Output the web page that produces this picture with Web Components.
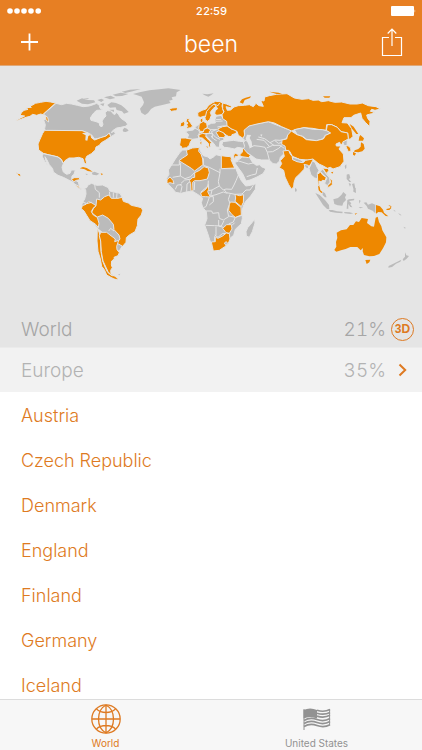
<!DOCTYPE html>
<html lang="en">
<head>
<meta charset="utf-8">
<meta name="viewport" content="width=device-width, initial-scale=1">
<title>been</title>
<style>
html, body {
  margin: 0;
  height: 100%;
}
body {
  --accent: #e77f23;
  --accent-text: #de7a22;
  --land: #bbbbbb;
  --visited: #ee8800;
  --sea: #e5e5e5;
  font-family: Inter, "Liberation Sans", sans-serif;
  font-weight: 300;
  font-size: 19px;
  font-variant-numeric: tabular-nums;
}
</style>
</head>
<body>
<been-app></been-app>

<template id="been-app">
<style>
:host {
  display: flex;
  flex-direction: column;
  height: 100vh;
  overflow: hidden;
  background: #fff;
}
.list {
  flex: 1;
  min-height: 0;
  padding-top: 1px;
  overflow: hidden;
  font-size: 18px;
}
</style>
<been-status time="22:59"></been-status>
<been-navbar>been</been-navbar>
<been-map></been-map>
<been-total class="world" percent="21%">World<button slot="action" aria-label="3D globe">3D</button></been-total>
<been-region percent="35%">Europe</been-region>
<div class="list">
  <been-country>Austria</been-country>
  <been-country>Czech Republic</been-country>
  <been-country>Denmark</been-country>
  <been-country>England</been-country>
  <been-country>Finland</been-country>
  <been-country>Germany</been-country>
  <been-country>Iceland</been-country>
</div>
<been-tabs></been-tabs>
</template>

<template id="been-status">
<style>
:host {
  display: grid;
  grid-template-columns: 1fr auto 1fr;
  align-items: center;
  height: 21px;
  padding: 0 6px 0 7px;
  background: var(--accent);
  color: #fff;
  font-size: 11px;
  font-weight: 500;
}
svg {
  display: block;
  fill: #fff;
}
.battery {
  justify-self: end;
}
</style>
<svg width="35" height="6" viewBox="0 0 35 6" role="img" aria-label="Signal">
  <circle cx="3" cy="3" r="2.8"/><circle cx="10" cy="3" r="2.8"/><circle cx="17" cy="3" r="2.8"/><circle cx="24" cy="3" r="2.8"/><circle cx="31.200" cy="3" r="2.8"/>
</svg>
<span id="time"></span>
<svg class="battery" width="25" height="10" viewBox="0 0 25 10" role="img" aria-label="Battery">
  <rect width="23" height="10" rx="1"/><path d="M23.600,3.200 Q25,5 23.600,6.800Z"/>
</svg>
</template>

<template id="been-navbar">
<style>
:host {
  display: grid;
  grid-template-columns: 1fr auto 1fr;
  align-items: center;
  height: 44px;
  padding: 0 16px;
  background: var(--accent);
  border-bottom: 1px solid #dfa878;
  color: #fff;
}
h1 {
  margin: 0;
  padding-top: 3px;
  font-size: 23px;
  line-height: 41px;
  font-weight: 300;
}
button {
  display: block;
  padding: 0;
  border: 0;
  background: none;
  color: inherit;
}
.share {
  justify-self: end;
}
svg {
  display: block;
  fill: none;
  stroke: currentColor;
}
</style>
<button class="add" aria-label="Add">
  <svg width="26" height="30" viewBox="0 0 26 30" stroke-width="1.8"><path d="M5,14H22M13.500,5.500V22.500"/></svg>
</button>
<h1><slot></slot></h1>
<button class="share" aria-label="Share">
  <svg width="26" height="32" viewBox="0 0 26 32" stroke-width="1.200"><path d="M9,10.500H2.500V28.500H21.500V10.500H15M12,19V2M7.700,6.500L12,2L16.300,6.500"/></svg>
</button>
</template>

<template id="been-map">
<style>
:host {
  display: block;
  background: var(--sea);
}
svg {
  display: block;
  width: 100%;
  height: auto;
  stroke: var(--sea);
  stroke-width: 3;
  stroke-linejoin: round;
}
.land {
  fill: var(--land);
}
.visited {
  fill: var(--visited);
}
.border {
  fill: none;
}
.sea {
  fill: var(--sea);
}
.islet {
  stroke: none;
}
</style>
<svg viewBox="0 0 1266 747" role="img" aria-label="World map with visited countries">
  <!-- North America -->
  <g transform="translate(0 42)">
    <path class="land" d="M168,70L185,74L200,70L215,72L232,76L250,80L268,78L280,74L290,70L298,76L300,84L308,90L290,91L282,98L276,106L271,114L273,121L285,124L297,128L300,138L306,140L309,133L306,123L312,114L318,108L315,98L322,92L334,93L338,100L344,104L350,97L356,104L362,114L370,120L378,125L383,133L376,139L362,142L350,144L338,152L334,158L342,154L346,160L340,166L332,170L329,160L318,168L300,174L284,177L275,165L265,160L246,152L144,152L134,146L136,134L131,120L143,114L130,103Z"/>
    <path class="visited" d="M167,69L152,66L138,64L122,67L106,70L98,75L90,78L94,82L78,83L84,88L72,91L65,97L60,106L74,108L62,114L45,122L60,119L78,112L90,109L98,103L110,106L122,102L132,105L143,112L146,126L138,120L137,108L130,102Z"/>
    <path class="visited" d="M134,151L246,152L260,157L272,163L275,174L284,180L302,173L318,168L328,159L332,170L318,180L304,188L298,196L288,201L286,210L274,221L260,229L257,237L260,250L254,252L249,236L236,232L222,234L207,234L195,242L190,250L184,238L174,231L162,228L144,224L130,220L116,210L114,192L120,178L128,160Z"/>
    <path class="sea islet" d="M246,160L262,156L272,165L265,168L262,182L256,181L257,166Z"/>
    <path class="land" d="M130,221L144,224L162,228L174,231L184,239L190,251L186,262L190,276L200,283L210,280L214,270L226,270L222,283L216,288L215,296L222,298L235,306L239,322L246,327L242,329L229,319L220,307L206,300L190,292L174,286L160,276L158,266L148,254L140,238L135,230L138,244L143,257L134,244L126,228Z"/>
    <path class="visited" d="M214,299L222,293L238,293L239,299L229,301L222,305ZM225,313L236,318L242,326L236,324Z"/>
    <path class="visited islet" d="M239,265L249,261L260,264L269,269L278,275L263,273L254,268ZM302,280L309,282L305,286ZM53,281L60,283L61,289L55,285ZM50,278L53,280L50,280Z"/>
    <path class="land islet" d="M275,278L284,275L298,281L290,286L278,284ZM256,281L264,282L260,285ZM368,150L373,143L381,146L386,152L377,156L370,155ZM230,62L246,55L262,60L282,61L286,67L264,73L246,71ZM250,56L268,54L262,58ZM292,60L304,56L312,60L304,66ZM312,52L332,47L346,54L330,58ZM338,44L362,38L385,42L366,48L348,49ZM365,35L390,29L422,27L398,34L376,39ZM322,75L334,67L348,69L364,76L374,84L386,96L372,101L366,94L350,90L347,82L330,83ZM300,72L313,70L310,79ZM328,89L342,89L342,96ZM134,143L144,150L137,150Z"/>
    <!-- Greenland -->
    <path class="land islet" d="M399,42L422,36L448,31L478,28L505,25L542,30L530,37L528,49L515,52L518,59L507,62L512,69L490,74L464,80L453,87L444,99L435,105L424,98L420,86L429,75L432,67L425,50L410,45Z"/>
  </g>

  <!-- South America -->
  <g transform="translate(180 327)">
    <path class="land" d="M56,34L70,41L80,38L84,30L95,25L110,31L128,30L145,38L149,48L180,55L186,66L190,80L176,95L162,160L182,180L186,215L177,229L166,221L145,190L130,175L112,160L64,96L67,84L74,72L78,57L77,44Z"/>
    <path class="visited" d="M186,67L190,79L205,84L214,91L228,94L244,98L248,106L244,120L234,132L232,152L225,170L208,180L199,188L198,202L188,214L170,204L180,192L177,180L162,164L160,148L145,130L128,120L112,126L103,120L95,112L100,101L108,92L110,72L122,75L134,65L147,60L154,70L174,70Z"/>
    <path class="visited" d="M67,92L78,88L86,80L96,84L108,92L99,100L94,110L100,120L112,127L117,145L115,158L107,148L90,137L80,121L72,108L64,101Z"/>
    <path class="visited" d="M112,158L118,174L122,198L123,230L128,258L136,278L143,292L154,301L166,306L173,314L156,309L140,300L133,284L125,274L121,252L114,229L111,198Z"/>
    <path class="visited" d="M122,172L140,172L150,180L166,192L164,200L176,196L170,214L171,224L178,233L174,242L162,247L163,252L155,258L154,270L157,278L152,286L153,297L164,303L154,301L144,290L138,277L129,258L124,230L122,198L118,182Z"/>
    <path class="border" d="M104,28L106,43L118,53L118,68M66,80L80,86L95,82M148,50L150,64M160,52L160,68M171,54L170,69M146,168L152,160L162,168"/>
    <path class="visited islet" d="M156,302L165,305L174,313L161,310Z"/>
    <path class="land islet" d="M174,299L181,296L178,301Z"/>
  </g>

  <!-- Africa and Arabia -->
  <g transform="translate(480 222)">
    <path class="land" d="M60,37L68,30L80,30L100,24L118,22L122,35L130,47L144,51L150,57L162,50L168,44L184,48L212,49L218,59L216,66L228,87L235,105L244,122L257,138L272,136L288,131L286,148L272,168L257,184L250,198L246,213L247,235L244,251L226,268L221,286L212,293L206,308L193,321L178,331L160,332L156,320L149,299L143,280L134,255L141,236L139,215L128,202L124,188L128,175L119,167L100,155L82,155L63,160L47,157L34,142L22,131L20,115L27,103L25,90L35,75L46,57Z"/>
    <path class="land" d="M223,67L232,62L247,51L268,51L278,68L289,76L300,74L304,80L318,86L309,101L291,111L270,120L258,123L248,101L236,85Z"/>
    <path class="land" d="M284,238L285,249L277,275L268,292L259,288L258,275L263,263L271,254Z"/>
    <path class="border" d="M35,75H58V62M62,68L61,108L38,112M61,108L75,116L92,110L104,97M130,75V55M130,76L148,82L180,98V86M184,86H225M180,98L175,125L178,138L156,150L145,152M178,138L190,150L198,147L215,148L222,135L228,122L235,105M192,149L200,158L225,163L246,162L258,150L270,150L280,136M156,150L152,168L168,164L190,156L202,160M148,172L138,200L130,203M145,170L160,170L160,185L148,195M138,213H155L158,220L176,218L178,235L190,240L206,230L202,210L210,190L205,178L210,163M137,256L164,257L184,258L192,242M176,240V258L190,262M168,260V285L164,290V304M164,285L174,292L188,280L200,281M207,228L226,232L246,226M226,232L220,246L206,252M216,256L224,248M63,130L74,120L90,118M46,148L52,135L65,134M62,158L66,140L60,132M80,155L81,132L90,125M104,126L103,150M145,122L144,138L122,157M250,165V190M260,110L275,105L288,102L292,84M223,68L236,63L265,72L280,69"/>
    <path class="visited" d="M57,62L68,54L82,45L79,31L97,24L118,22L116,34L123,42L128,57L129,74L104,93L94,85Z"/>
    <path class="visited" d="M184,47L198,49L212,50L217,63L213,59L224,84L184,86Z"/>
    <path class="visited" d="M104,98L119,91L132,80L145,84L148,98L142,117L120,122L104,122L98,127L99,152L93,153L92,131L88,121L97,113L104,112Z"/>
    <path class="visited" d="M21,119L30,111L39,121L42,131L30,128L21,131Z"/>
    <path class="visited" d="M145,133L146,148L143,155L151,171L136,170L125,170L122,159L132,152L140,145Z"/>
    <path class="visited" d="M225,163L238,167L251,164L250,187L244,200L225,184L227,174Z"/>
    <path class="visited" d="M211,186L225,187L243,202L244,225L226,232L216,224L206,211L208,194Z"/>
    <path class="visited" d="M188,265L200,254L214,254L216,267L208,280L198,278Z"/>
    <path class="visited" d="M154,306L166,305L166,292L174,295L188,288L199,279L208,281L210,297L205,310L193,321L178,331L160,333Z"/>
    <path class="land" d="M193,309L199,305L203,310L197,315Z"/>
    <!-- Middle East -->
    <path class="visited" d="M238,46L247,36L248,24L258,20L264,27L261,37L271,46L266,53L246,50Z"/>
    <path class="visited" d="M221,45L226,40L236,44L232,51L227,49L222,60Z"/>
    <path class="land islet" d="M211,23L221,20L216,27Z"/>
  </g>

  <!-- Europe -->
  <g transform="translate(480 42)">
    <path class="visited" d="M27,88L36,84L49,83L55,87L47,92L34,94Z"/>
    <path class="land islet" d="M127,41L142,43L161,40L154,45L145,50L134,46Z"/>
    <path class="visited" d="M113,98L126,91L138,87L146,76L156,69L167,64L180,65L188,69L186,78L189,90L192,98L184,104L170,106L164,100L166,92L173,86L168,79L159,86L151,97L154,106L149,119L142,124L136,119L134,108L122,112L114,110Z"/>
    <path class="border" d="M136,111L140,94L152,80L162,72L174,77L179,69M162,72L169,80"/>
    <path class="visited" d="M120,119L128,113L129,125L122,129Z"/>
    <path class="land" d="M85,152L100,150L108,139L118,132L128,132L141,136L154,130L166,129L165,118L168,109L184,106L189,115L200,124L204,138L186,148L174,153L190,164L192,180L180,184L178,202L168,201L162,191L151,181L140,169L116,172L112,176L96,178L82,174L86,164L76,155Z"/>
    <path class="border" d="M104,144L116,150L120,160L114,167L118,174M141,134L142,145L152,149L172,149M167,119L184,118M168,124L188,123M172,141L188,138L204,138M141,161L156,160L167,172L180,178M153,168L161,177L170,182M157,160V175M168,149L154,155L158,162"/>
    <path class="visited" d="M118,131L130,124L140,130L142,142L134,148L136,155L120,154L116,145Z"/>
    <path class="visited" d="M132,148L142,144L153,150L148,154L148,160L132,161L116,163L119,158L130,156Z"/>
    <path class="visited" d="M117,164L128,160L139,163L137,169L146,180L155,188L151,191L152,200L147,202L145,190L134,180L127,174L117,173ZM135,198L146,199L143,205ZM120,185L126,183L125,194L120,193Z"/>
    <path class="visited" d="M62,174L76,174L97,178L91,186L88,196L80,203L66,205L63,198L58,198L61,184Z"/>
    <path class="visited" d="M80,116L89,116L86,122L91,128L98,138L92,143L77,146L83,139L80,134L84,129L78,125ZM62,129L72,124L75,132L71,139L60,141Z"/>
    <path class="visited" d="M168,157L177,152L188,155L196,166L193,173L177,172Z"/>
    <path class="visited" d="M173,147L188,140L202,138L214,147L229,150L229,160L216,164L216,170L205,169L198,165L190,158L178,153Z"/>
    <path class="land islet" d="M174,207L184,206L183,209ZM119,180L124,177L123,182Z"/>
  </g>

  <!-- Asia -->
  <g transform="translate(780 42)">
    <path class="land" d="M-112,185L-96,183L-80,181L-62,184L-46,185L-52,174L-46,160L-48,147L-30,134L0,130L25,125L55,137L95,152L81,171L78,190L80,209L73,220L61,232L58,244L49,252L39,251L28,240L5,240L-12,237L-25,227L-39,218L-50,205L-67,202L-77,207L-95,203L-108,202L-114,194Z"/>
    <path class="border" d="M-50,186L-46,199L-50,207M-67,203L-76,218M-32,204L-18,197L0,199L15,202L22,217L28,240M20,204L38,196L60,196L73,205M22,216L38,215L56,205L65,197M-10,178L12,181L28,199M-5,171L14,176L30,188L45,180L60,181L80,176M30,188L43,197M45,182L55,190L68,187M-52,178L-36,184L-28,192"/>
    <path class="sea islet" d="M-39,164L-27,165L-31,174L-25,185L-23,200L-31,203L-37,188L-43,176ZM0,164L7,163L5,170ZM-70,166L-83,165L-92,170L-102,171L-106,182L-80,179L-56,181L-55,176L-70,171Z"/>
    <path class="visited" d="M-112,69L-101,72L-86,78L-85,84L-102,80L-98,91L-88,90L-78,81L-65,77L-47,76L-32,74L-20,80L-12,70L-3,77L10,79L2,61L12,63L14,51L28,47L49,43L81,41L103,54L126,58L146,56L159,61L175,60L185,65L205,62L224,67L245,66L270,72L292,72L307,69L325,77L348,80L361,87L345,91L335,88L331,94L344,96L335,101L320,105L323,115L330,124L329,140L316,127L306,115L302,99L281,106L273,113L252,113L246,128L262,129L275,146L279,169L270,178L265,176L263,159L243,155L232,142L215,134L200,134L198,151L180,149L158,145L132,143L105,149L95,153L65,140L43,129L25,125L-9,132L-33,138L-48,151L-46,165L-51,175L-65,166L-69,154L-87,146L-99,137L-100,124L-112,116L-114,104L-108,95L-112,86Z"/>
    <path class="visited islet" d="M-61,67L-54,58L-43,53L-27,49L-30,54L-46,60L-51,71ZM28,35L56,38L68,43L50,42ZM189,49L211,49L208,53L194,53ZM269,132L281,140L295,162L289,162L276,146Z"/>
    <path class="land" d="M103,149L132,143L160,148L187,149L212,155L204,163L195,166L190,176L170,182L140,178L128,169L112,164Z"/>
    <path class="visited" d="M94,153L111,164L126,169L139,179L169,182L190,177L197,166L212,159L199,151L202,134L215,134L232,142L243,155L263,159L265,176L254,185L242,195L239,187L228,192L229,198L243,198L237,207L250,222L252,244L240,260L219,267L211,262L202,265L190,258L177,252L160,238L142,240L119,238L97,229L89,214L77,210L75,198L65,193L66,180L80,177L83,165Z"/>
    <path class="visited" d="M69,213L86,211L90,221L97,230L98,238L129,248L137,241L159,237L158,246L149,256L147,265L135,257L132,268L118,283L107,293L102,308L101,321L94,327L86,314L75,291L71,271L58,263L65,251L61,242L73,229Z"/>
    <path class="land" d="M97,231L113,236L129,243L127,248L111,245L98,239ZM132,253L145,256L146,266L137,264ZM157,243L165,247L172,263L177,271L172,281L174,296L164,294L153,285L147,266Z"/>
    <path class="visited" d="M172,283L182,276L188,285L199,292L195,302L187,301L184,306L177,303L179,317L176,323L173,300Z"/>
    <path class="visited" d="M188,264L205,266L207,273L200,278L207,290L217,302L217,314L203,325L204,316L212,308L209,295L199,281Z"/>
    <path class="land" d="M181,274L188,267L198,281L209,294L210,307L202,317L194,310L197,302L201,294L190,284ZM248,186L262,179L261,197L252,196Z"/>
    <path class="visited" d="M257,198L264,197L272,204L273,213L265,215Z"/>
    <path class="visited islet" d="M298,170L301,165L312,175L309,182L296,182ZM303,187L311,192L314,206L307,214L295,217L282,215L284,211L295,207L302,200ZM279,216L288,220L284,227L279,224ZM213,277L220,275L217,281Z"/>
    <path class="land islet" d="M254,258L259,253L259,264L256,267ZM261,285L268,283L271,294L266,297L274,306L268,305L262,296ZM276,312L283,310L286,326L281,329ZM266,309L273,312L270,320Z"/>
  </g>

  <!-- South-east Asia and Oceania -->
  <g class="islet" transform="translate(870 312)">
    <path class="visited" d="M84,47L89,50L91,61L98,67L94,69L86,61Z"/>
    <path class="land" d="M98,65L105,70L110,82L105,82L98,75ZM76,69L89,75L105,90L117,105L118,118L111,117L99,105L87,86ZM116,120L127,120L141,124L158,125L157,130L138,128L120,125ZM162,126L178,127L190,130L181,132L164,130ZM130,88L144,84L154,75L160,66L169,74L165,82L168,90L160,98L157,107L143,106L133,102ZM172,90L177,88L193,86L192,91L177,93L184,100L181,103L187,112L181,111L175,102V116H170ZM190,59L197,53L198,69L190,65ZM207,90L212,92L208,101ZM15,53L20,58L20,64L15,65ZM170,14L176,12L178,25L174,28L182,35L178,36L170,27ZM221,98L229,97L234,104L246,100L256,104V130L248,122L234,116L230,108ZM206,111L220,112L211,115ZM310,119L318,124L313,124ZM324,128L335,136L330,136ZM340,170L347,173L345,176ZM345,247L349,256L357,258L350,266L341,273L338,268L345,260ZM334,269L331,275L318,281L306,291L295,293L296,288L313,280Z"/>
    <path class="visited" d="M258,105L270,109L279,119L282,128L295,139L287,138L275,127L265,126L258,131ZM289,117L299,115L302,110L304,114L298,120L290,120ZM295,105L303,108L305,112L298,108ZM194,131L202,129L196,134Z"/>
    <path class="visited" d="M140,188L153,181L170,178L180,165L190,165L198,154L207,156L215,144L234,147L231,159L244,169L252,170L257,143L263,140L267,156L274,169L277,181L289,202L288,217L279,235L268,252L252,258L238,259L222,255L218,244L219,234L212,241L202,231L181,231L167,237L153,241L139,245L133,240L139,230L138,216L142,204Z"/>
    <path class="visited" d="M226,270L241,269L238,277L230,282Z"/>
  </g>
</svg>
</template>

<template id="been-total">
<style>
:host {
  display: flex;
  align-items: center;
  height: 28px;
  padding: 0 8px 4px 21px;
  background: var(--sea);
  border-bottom: 1px solid #ebebeb;
  color: #a6a6a6;
}
.name {
  flex: 1;
}
::slotted(button) {
  box-sizing: border-box;
  width: 23px;
  height: 23px;
  margin-left: 5px;
  padding: 0;
  border: 1px solid var(--accent-text);
  border-radius: 50%;
  background: none;
  color: var(--accent-text);
  font: 700 12px "Liberation Sans", sans-serif;
}
</style>
<span class="name"><slot></slot></span>
<span id="percent"></span>
<slot name="action"></slot>
</template>

<template id="been-region">
<style>
:host {
  display: block;
}
button {
  display: flex;
  align-items: center;
  width: 100%;
  height: 44px;
  padding: 0 8px 0 21px;
  border: 0;
  background: #f2f2f2;
  color: #b3b3b3;
  font: inherit;
}
.name {
  flex: 1;
  text-align: left;
}
svg {
  width: 23px;
  height: 23px;
  margin-left: 5px;
  fill: none;
  stroke: var(--accent-text);
  stroke-width: 2;
}
</style>
<button>
  <span class="name"><slot></slot></span>
  <span id="percent"></span>
  <svg viewBox="0 0 23 23"><path d="M8.500,5.500L14.200,11L8.500,16.500"/></svg>
</button>
</template>

<template id="been-country">
<style>
:host {
  display: block;
}
button {
  display: block;
  width: 100%;
  height: 45px;
  padding: 0 21px;
  border: 0;
  background: none;
  color: var(--accent-text);
  font: inherit;
  text-align: left;
}
</style>
<button><slot></slot></button>
</template>

<template id="been-tabs">
<style>
:host {
  display: block;
  background: #f7f7f7;
  border-top: 1px solid #dcdcdc;
}
nav {
  display: grid;
  grid-template-columns: 1fr 1fr;
}
button {
  display: flex;
  flex-direction: column;
  align-items: center;
  gap: 2px;
  height: 50px;
  padding: 4px 0 0;
  border: 0;
  background: none;
  color: #929292;
  font: inherit;
  font-size: 10px;
  line-height: 14px;
  font-weight: 400;
}
button[aria-current] {
  color: var(--accent-text);
}
svg {
  display: block;
  width: 30px;
  height: 30px;
  fill: none;
  stroke: currentColor;
}
</style>
<nav>
  <button aria-current="page">
    <svg viewBox="0 0 30 30" stroke-width="1.300"><circle cx="15" cy="15" r="14.200"/><path d="M15,1V29M1,15H29M15,1Q7.500,5 7.500,15T15,29M15,1Q22.500,5 22.500,15T15,29M5.500,5Q9,8.500 15,8.500T24.500,5M5.500,25Q9,21.500 15,21.500T24.500,25"/></svg>
    World
  </button>
  <button>
    <svg viewBox="0 0 30 30"><path fill="currentColor" stroke="none" d="M1.500,6Q8,3 15,6V14.500Q8,11.500 1.500,14.500Z"/><path stroke-width="1.700" d="M15,6.300Q22,8.500 28,5.500M15,9.200Q22,11.400 28,8.400M15,12.100Q22,14.300 28,11.300M2,16.500Q8,13 15,15.500T28,14.500M2,19.500Q8,16 15,18.500T28,17.500M2,22.500Q8,19 15,21.500T28,20.700"/><path d="M2,5V26M27.600,5V21"/></svg>
    United States
  </button>
</nav>
</template>

<script>
class BeenElement extends HTMLElement {
	constructor() {
		super();
		this.attachShadow({ mode: "open" });
		const template = document.getElementById(this.localName);
		this.shadowRoot.appendChild(template.content.cloneNode(true));
	}
}

class BeenApp extends BeenElement {}
class BeenNavbar extends BeenElement {}
class BeenMap extends BeenElement {}
class BeenCountry extends BeenElement {}
class BeenTabs extends BeenElement {}

class BeenStatus extends BeenElement {
	static observedAttributes = ["time"];

	attributeChangedCallback(name, oldValue, newValue) {
		this.shadowRoot.getElementById("time").textContent = newValue;
	}
}

// rows with a percentage on the right
class BeenTotal extends BeenElement {
	static observedAttributes = ["percent"];

	attributeChangedCallback(name, oldValue, newValue) {
		this.shadowRoot.getElementById("percent").textContent = newValue;
	}
}
class BeenRegion extends BeenTotal {}

customElements.define("been-status", BeenStatus);
customElements.define("been-navbar", BeenNavbar);
customElements.define("been-map", BeenMap);
customElements.define("been-total", BeenTotal);
customElements.define("been-region", BeenRegion);
customElements.define("been-country", BeenCountry);
customElements.define("been-tabs", BeenTabs);
customElements.define("been-app", BeenApp);
</script>
</body>
</html>
